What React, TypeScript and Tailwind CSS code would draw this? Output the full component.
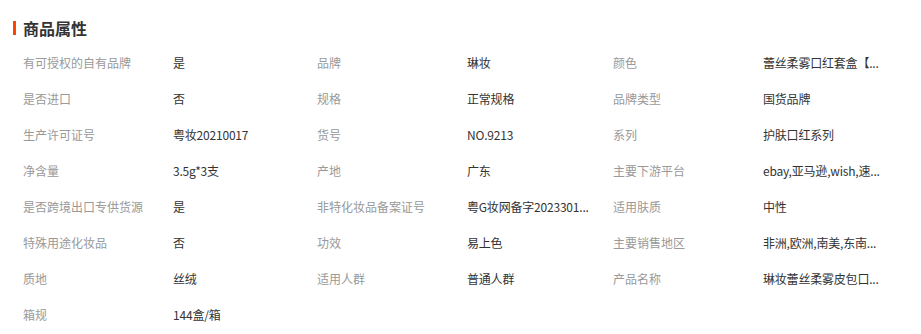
const attrs: [string, string][] = [
  ['有可授权的自有品牌', '是'],
  ['品牌', '琳妆'],
  ['颜色', '蕾丝柔雾口红套盒【...'],
  ['是否进口', '否'],
  ['规格', '正常规格'],
  ['品牌类型', '国货品牌'],
  ['生产许可证号', '粤妆20210017'],
  ['货号', 'NO.9213'],
  ['系列', '护肤口红系列'],
  ['净含量', '3.5g*3支'],
  ['产地', '广东'],
  ['主要下游平台', 'ebay,亚马逊,wish,速...'],
  ['是否跨境出口专供货源', '是'],
  ['非特化妆品备案证号', '粤G妆网备字2023301...'],
  ['适用肤质', '中性'],
  ['特殊用途化妆品', '否'],
  ['功效', '易上色'],
  ['主要销售地区', '非洲,欧洲,南美,东南...'],
  ['质地', '丝绒'],
  ['适用人群', '普通人群'],
  ['产品名称', '琳妆蕾丝柔雾皮包口...'],
  ['箱规', '144盒/箱'],
]

export default function App() {
  return (
    <div
      className="w-[921px] h-[334px] bg-white overflow-hidden"
      style={{ fontFamily: '"Microsoft YaHei", "Noto Sans CJK SC", sans-serif' }}
    >
      <div className="flex items-center pt-[18px] pl-[13px] h-[38px]">
        <span className="w-[3px] h-[14px] bg-[#ff4400]" />
        <h2 className="ml-[7px] text-[16px] leading-[20px] font-bold text-[#333]">商品属性</h2>
      </div>

      <div className="grid grid-cols-[294px_296px_294px] pl-[23px] mt-[7px]">
        {attrs.map(([label, value]) => (
          <div key={label} className="flex items-center h-[36px] text-[12px]">
            <span className="w-[150px] shrink-0 text-[#999] whitespace-nowrap">{label}</span>
            <span className="text-[#333] whitespace-nowrap tracking-[-0.2px]">{value}</span>
          </div>
        ))}
      </div>
    </div>
  )
}
